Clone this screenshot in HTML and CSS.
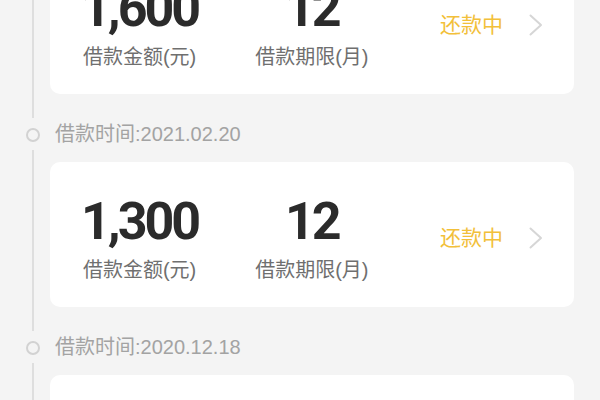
FILE: index.html
```html
<!DOCTYPE html>
<html lang="zh-CN">
<head>
<meta charset="utf-8">
<title>借款记录</title>
<link rel="stylesheet" href="styles.css">
</head>
<body>
<div class="list">
  <div class="row">
    <div class="gutter"><div class="track"><span class="line"></span></div></div>
    <div class="card">
      <div class="col">
        <div class="num">1,600</div>
        <div class="label">借款金额(元)</div>
      </div>
      <div class="col col-term">
        <div class="num">12</div>
        <div class="label">借款期限(月)</div>
      </div>
      <div class="status">还款中</div>
      <svg class="chev" width="14" height="22" viewBox="0 0 14 22"><polyline points="1.5,1.5 12,11 1.5,20.5" fill="none" stroke="#d6d6d6" stroke-width="2" stroke-linecap="round" stroke-linejoin="round"/></svg>
    </div>
  </div>
  <div class="row date-row">
    <div class="gutter"><div class="track"><span class="line top"></span><span class="dot"></span><span class="line"></span></div></div>
    <div class="date">借款时间:2021.02.20</div>
  </div>
  <div class="row">
    <div class="gutter"><div class="track"><span class="line"></span></div></div>
    <div class="card">
      <div class="col">
        <div class="num">1,300</div>
        <div class="label">借款金额(元)</div>
      </div>
      <div class="col col-term">
        <div class="num">12</div>
        <div class="label">借款期限(月)</div>
      </div>
      <div class="status">还款中</div>
      <svg class="chev" width="14" height="22" viewBox="0 0 14 22"><polyline points="1.5,1.5 12,11 1.5,20.5" fill="none" stroke="#d6d6d6" stroke-width="2" stroke-linecap="round" stroke-linejoin="round"/></svg>
    </div>
  </div>
  <div class="row date-row">
    <div class="gutter"><div class="track"><span class="line top"></span><span class="dot"></span><span class="line"></span></div></div>
    <div class="date">借款时间:2020.12.18</div>
  </div>
  <div class="row">
    <div class="gutter"><div class="track"><span class="line"></span></div></div>
    <div class="card">
      <div class="col">
        <div class="num">1,000</div>
        <div class="label">借款金额(元)</div>
      </div>
      <div class="col col-term">
        <div class="num">12</div>
        <div class="label">借款期限(月)</div>
      </div>
      <div class="status">已结清</div>
      <svg class="chev" width="14" height="22" viewBox="0 0 14 22"><polyline points="1.5,1.5 12,11 1.5,20.5" fill="none" stroke="#d6d6d6" stroke-width="2" stroke-linecap="round" stroke-linejoin="round"/></svg>
    </div>
  </div>
</div>
</body>
</html>
```
FILE: styles.css
```css
html, body {
  margin: 0;
  padding: 0;
  height: 400px;
  overflow: hidden;
  background: #f4f4f4;
}
body {
  font-family: "Liberation Sans", "Noto Sans CJK SC", sans-serif;
}
.list {
  margin-top: -51px;
  display: flex;
  flex-direction: column;
}
.row {
  display: flex;
}
.gutter {
  width: 50px;
  flex: none;
  padding-left: 25px;
  box-sizing: border-box;
  display: flex;
}
.track {
  width: 15px;
  display: flex;
  flex-direction: column;
  align-items: center;
}
.line {
  width: 2px;
  flex: 1;
  background: #dedede;
}
.line.top {
  flex: none;
  height: 24px;
  margin-bottom: 10px;
}
.dot {
  width: 10px;
  height: 10px;
  border: 2px solid #d2d2d2;
  border-radius: 50%;
  margin-bottom: 8px;
  flex: none;
}
.card {
  width: 524px;
  height: 145px;
  box-sizing: border-box;
  background: #fff;
  border-radius: 10px;
  display: flex;
  align-items: center;
  padding: 7px 31px 0 31px;
}
.col {
  display: flex;
  flex-direction: column;
  align-items: center;
}
.col-term {
  margin-left: 57px;
}
.num {
  font-family: "Roboto", "Liberation Sans", sans-serif;
  font-weight: 700;
  font-size: 52px;
  line-height: 52px;
  letter-spacing: -3px;
  color: #2b2b2b;
}
.label {
  margin-top: 12px;
  font-size: 20px;
  line-height: 20px;
  color: #6f6f6f;
}
.status {
  margin-left: auto;
  font-size: 21px;
  line-height: 22px;
  color: #f2c03a;
}
.chev {
  margin-left: 26px;
  flex: none;
}
.date-row {
  height: 68px;
}
.date {
  padding: 30px 0 0 5px;
  font-size: 20px;
  line-height: 20px;
  color: #a3a3a3;
}
```
